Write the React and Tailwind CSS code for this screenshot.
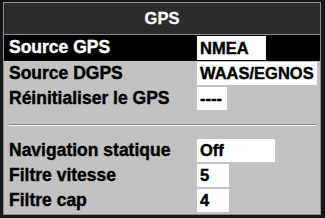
import React from 'react';

const top = [
  { label: 'Source GPS', value: 'NMEA', w: 'w-[69px]', h: 'h-[26px]', box: 'h-[24px]', active: true },
  { label: 'Source DGPS', value: 'WAAS/EGNOS', w: 'w-[120px]', h: 'h-[25px]', box: 'h-[23px]' },
  { label: 'Réinitialiser le GPS', value: '----', w: 'w-[30px]', h: 'h-[25px]', box: 'h-[23px]' },
];

const bottom = [
  { label: 'Navigation statique', value: 'Off', w: 'w-[78px]' },
  { label: 'Filtre vitesse', value: '5', w: 'w-[32px]' },
  { label: 'Filtre cap', value: '4', w: 'w-[32px]' },
];

const Row = ({ label, value, w, h = 'h-[25px]', box = 'h-[23px]', active }) => (
  <div className={`flex items-center ${h} ${active ? 'bg-black text-white' : 'text-black'}`}>
    <div className="w-[193px] pl-[5px] text-[17.5px] font-bold leading-none whitespace-nowrap [-webkit-text-stroke:0.4px_currentcolor]">
      {label}
    </div>
    <div className={`${w} ${box} bg-white text-black flex items-center pl-[3px] text-[16.5px] font-bold leading-none whitespace-nowrap [-webkit-text-stroke:0.4px_currentcolor]`}>
      {value}
    </div>
  </div>
);

export default function App() {
  return (
    <div
      className="w-[325px] h-[218px] bg-[#161616] pl-[3px] pt-[2px] pr-[4px] pb-[3px]"
      style={{ fontFamily: '"Liberation Sans", Arial, sans-serif' }}
    >
      <div className="h-full border border-[#8f8f8f] bg-[#c2c2c2] flex flex-col">
        <div className="h-[31px] bg-[#2c2c2c] text-white flex items-center justify-center text-[16.5px] font-bold [-webkit-text-stroke:0.3px_currentcolor]">
          GPS
        </div>
        <div className="h-px bg-[#8a8a8a]" />
        {top.map((r) => (
          <Row key={r.label} {...r} />
        ))}
        <div className="h-[13px]" />
        <div className="ml-[5px] mr-[3px] border-t border-[#8a8a8a] border-b border-b-[#f2f2f2]" />
        <div className="h-[12px]" />
        {bottom.map((r) => (
          <Row key={r.label} {...r} />
        ))}
      </div>
    </div>
  );
}
